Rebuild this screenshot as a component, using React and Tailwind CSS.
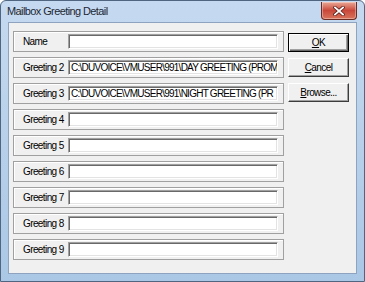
const rows = [
  { label: 'Name', value: '' },
  { label: 'Greeting 2', value: 'C:\\DUVOICE\\VMUSER\\991\\DAY GREETING (PROM' },
  { label: 'Greeting 3', value: 'C:\\DUVOICE\\VMUSER\\991\\NIGHT GREETING (PR' },
  { label: 'Greeting 4', value: '' },
  { label: 'Greeting 5', value: '' },
  { label: 'Greeting 6', value: '' },
  { label: 'Greeting 7', value: '' },
  { label: 'Greeting 8', value: '' },
  { label: 'Greeting 9', value: '' },
];

const buttons = [
  { key: 'O', rest: 'K', isDefault: true },
  { key: 'C', rest: 'ancel' },
  { key: 'B', rest: 'rowse...' },
];

const CloseButton = () => (
  <div className="w-[36px] h-[18px] mt-[1px] mr-[7px] rounded-b-[4px] border border-t-0 border-[#6b2a22] bg-gradient-to-b from-[#e9a796] via-[#c9473a] to-[#d8735c] flex items-center justify-center shadow-[inset_0_0_0_1px_rgba(255,255,255,0.35)]">
    <svg width="12" height="10" viewBox="0 0 12 10">
      <path d="M2 1.5 L10 8.5 M10 1.5 L2 8.5" stroke="#5a1e18" strokeWidth="3.4" strokeLinecap="square" />
      <path d="M2 1.5 L10 8.5 M10 1.5 L2 8.5" stroke="#ffffff" strokeWidth="1.8" strokeLinecap="square" />
    </svg>
  </div>
);

const Row = ({ label, value }) => (
  <div className="h-[21px] flex items-center border border-[#a0a0a0] shadow-[inset_1px_1px_0_#ffffff]">
    <span className="w-[54px] pl-[9px] whitespace-nowrap">{label}</span>
    <div className="w-[210px] h-[15px] bg-white border border-t-[#a0a0a0] border-l-[#a0a0a0] border-b-white border-r-white shadow-[inset_1px_1px_0_#696969,inset_-1px_-1px_0_#e3e3e3] overflow-hidden">
      <div className="pl-[2px] leading-[13px] tracking-[-0.75px] whitespace-nowrap overflow-hidden">{value}</div>
    </div>
  </div>
);

const Button = ({ k, rest, isDefault }) => (
  <div
    className={`h-[19px] w-[61px] flex items-center justify-center bg-[#f0f0f0] ${
      isDefault
        ? 'border border-black shadow-[inset_1px_1px_0_#ffffff,inset_-1px_-1px_0_#696969,inset_-2px_-2px_0_#a0a0a0]'
        : 'border border-t-white border-l-white border-b-[#3c3c3c] border-r-[#3c3c3c] shadow-[inset_-1px_-1px_0_#a0a0a0]'
    }`}
  >
    <span>
      <span className="underline underline-offset-[1px]">{k}</span>
      {rest}
    </span>
  </div>
);

export default function App() {
  return (
    <div
      className="w-[365px] h-[282px] flex flex-col bg-gradient-to-b from-[#c5daf0] via-[#b8d0ea] to-[#aac7e6] border border-[#4f6580] rounded-t-[6px] text-black"
      style={{ fontFamily: '"Liberation Sans", Arial, sans-serif' }}
    >
      <div className="h-[21px] flex items-start justify-between shrink-0">
        <span className="pl-[6px] pt-[4px] text-[11px] tracking-[-0.6px] leading-[13px] text-[#1e2733]">
          Mailbox Greeting Detail
        </span>
        <CloseButton />
      </div>
      <div className="flex-1 mx-[7px] mb-[7px] bg-[#f0f0f0] border border-[#8da3bf] flex pt-[8px] pl-[4px] text-[10px] tracking-[-0.6px]">
        <div className="w-[271px] flex flex-col gap-[5px]">
          {rows.map((r) => (
            <Row key={r.label} label={r.label} value={r.value} />
          ))}
        </div>
        <div className="ml-[4px] mt-[2px] flex flex-col gap-[6px]">
          {buttons.map((b) => (
            <Button key={b.key} k={b.key} rest={b.rest} isDefault={b.isDefault} />
          ))}
        </div>
      </div>
    </div>
  );
}
